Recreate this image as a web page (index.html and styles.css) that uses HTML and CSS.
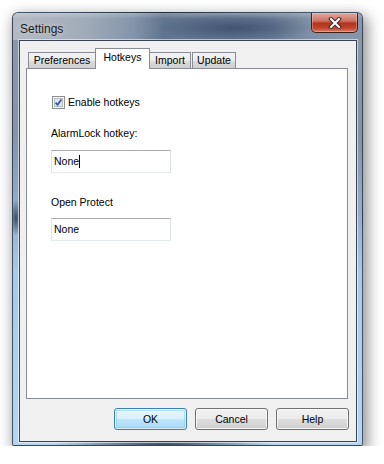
FILE: index.html
```html
<!DOCTYPE html>
<html lang="en">

<head>
    <meta charset="UTF-8">
    <title>Settings</title>
    <link rel="stylesheet" href="styles.css">
</head>

<body>
    <div class="window">
        <div class="titlebar">
            <span class="title">Settings</span>
            <div class="close">
                <svg width="14" height="12" viewBox="0 0 14 12">
                    <path d="M3 2 L11 10 M11 2 L3 10" stroke="#3a2b2b" stroke-width="4" stroke-linecap="square" />
                    <path d="M3 2 L11 10 M11 2 L3 10" stroke="#ffffff" stroke-width="2" stroke-linecap="square" />
                </svg>
            </div>
        </div>

        <div class="client">
            <div class="tabs">
                <div class="tab tab-pref">Preferences</div>
                <div class="tab tab-hot active">Hotkeys</div>
                <div class="tab tab-import">Import</div>
                <div class="tab tab-update">Update</div>
            </div>

            <div class="panel">
                <div class="check">
                    <span class="box">
                        <svg width="13" height="13" viewBox="0 0 13 13">
                            <rect x="0.5" y="0.5" width="12" height="12" fill="#f4f4f4" stroke="#8e8f8f" />
                            <rect x="2.5" y="2.5" width="8" height="8" fill="#dfe6ef" stroke="#b4bcc8" />
                            <path d="M3.6 6.6 L5.6 8.8 L9.4 3.4" fill="none" stroke="#3e5c96" stroke-width="1.8" />
                        </svg>
                    </span>
                    Enable hotkeys
                </div>

                <div class="field-label">AlarmLock hotkey:</div>
                <div class="textbox">None<span class="caret"></span></div>

                <div class="field-label second">Open Protect</div>
                <div class="textbox last">None</div>
            </div>

            <div class="buttons">
                <button class="btn default">OK</button>
                <button class="btn">Cancel</button>
                <button class="btn">Help</button>
            </div>
        </div>
    </div>
</body>

</html>
```

FILE: styles.css
```css
* {
    margin: 0;
    box-sizing: border-box;
}

body {
    background-color: #ffffff;
    margin: 0;
    font-family: "Liberation Sans", Arial, sans-serif;
    font-size: 10.5px;
    color: #000000;
}

/* glass frame */
.window {
    margin: 12px 0 0 12px;
    width: 351px;
    height: 434px;
    padding: 0 5px 5px 6px;
    border-radius: 6px 6px 2px 2px;
    border: 1px solid rgba(30, 40, 55, 0.75);
    background:
        radial-gradient(ellipse 110px 8px at 150px 100%, rgba(45, 60, 82, 0.95), rgba(45, 60, 82, 0) 100%),
        radial-gradient(ellipse 6px 18px at 3px 205px, rgba(50, 66, 86, 0.9), rgba(50, 66, 86, 0) 100%),
        linear-gradient(to bottom, #8d9ab0 0, #8393a9 120px, #93aecd 200px, #a8c9ec 260px, #b4d5f3 100%);
    box-shadow: 3px 5px 14px 2px rgba(0, 0, 0, 0.42);
    overflow: hidden;
}

.titlebar {
    height: 27px;
    display: flex;
    justify-content: space-between;
    align-items: flex-start;
    margin: 0 -5px 0 -6px;
    padding: 0 4px 0 7px;
    background:
        radial-gradient(ellipse 78px 14px at 222px 15px, rgba(52, 70, 100, 0.75), rgba(52, 70, 100, 0) 100%),
        linear-gradient(to bottom, rgba(255, 255, 255, 0.25) 0, rgba(255, 255, 255, 0) 6px),
        linear-gradient(to right, #b3bac4 0, #a2acb9 70px, #8595aa 120px, #61748f 150px, #6a7c96 260px, #8191a6 300px, #8797ab 100%);
}

.title {
    font-size: 12px;
    line-height: 14px;
    margin-top: 9px;
    color: #1c1c1c;
    text-shadow: 0 0 6px rgba(255, 255, 255, 0.6);
}

.close {
    width: 47px;
    height: 20px;
    display: flex;
    align-items: center;
    justify-content: center;
    border: 1px solid #3d1e1e;
    border-top: none;
    border-radius: 0 0 5px 5px;
    background: linear-gradient(to bottom, #e0a99e 0, #d07565 40%, #b2341f 55%, #c3452c 80%, #d8836d 100%);
    box-shadow: inset 0 0 0 1px rgba(255, 220, 210, 0.35);
}

/* client area */
.client {
    height: 402px;
    border: 1px solid #3b4350;
    background-color: #f0f0f0;
    padding: 7px 8px 11px 6px;
    display: flex;
    flex-direction: column;
    box-shadow: 0 0 0 1px rgba(255, 255, 255, 0.55);
}

.tabs {
    height: 20px;
    display: flex;
    align-items: flex-end;
    padding-left: 2px;
}

.tab {
    height: 16px;
    line-height: 15px;
    text-align: center;
    border: 1px solid #898c95;
    border-bottom: none;
    background: linear-gradient(to bottom, #f3f3f3 0, #ebebeb 50%, #dddddd 51%, #cfcfcf 100%);
}

.tab-pref {
    width: 68px;
}

.tab-hot {
    width: 55px;
    margin-left: -1px;
}

.tab-import {
    width: 42px;
    margin-left: -1px;
}

.tab-update {
    width: 44px;
    margin-left: 1px;
}

.tab.active {
    height: 21px;
    line-height: 16px;
    margin-bottom: -1px;
    background: #ffffff;
    position: relative;
    z-index: 1;
}

.panel {
    flex: 1;
    background-color: #ffffff;
    border: 1px solid #898c95;
    padding: 26px 0 0 24px;
}

.check {
    display: flex;
    align-items: center;
    height: 14px;
    line-height: 14px;
}

.box {
    display: flex;
    width: 13px;
    height: 13px;
    margin: 1px 3px 0 1px;
}

.field-label {
    line-height: 14px;
    margin-top: 17px;
}

.field-label.second {
    margin-top: 22px;
}

.textbox {
    width: 120px;
    height: 23px;
    margin-top: 10px;
    line-height: 21px;
    padding-left: 2px;
    border: 1px solid;
    border-color: #abadb3 #dbdfe6 #e3e9ef #e2e3ea;
    display: flex;
    align-items: center;
}

.textbox.last {
    margin-top: 9px;
}

.caret {
    width: 1px;
    height: 13px;
    background-color: #000000;
}

.buttons {
    display: flex;
    justify-content: flex-end;
    gap: 8px;
    margin: 9px -1px 0 0;
}

.btn {
    width: 73px;
    height: 22px;
    font-family: "Liberation Sans", Arial, sans-serif;
    font-size: 10.5px;
    color: #000000;
    border: 1px solid #707070;
    border-radius: 3px;
    background: linear-gradient(to bottom, #f2f2f2 0, #ebebeb 50%, #dddddd 51%, #cfcfcf 100%);
    box-shadow: inset 0 0 0 1px rgba(255, 255, 255, 0.8);
    padding: 0;
}

.btn.default {
    border-color: #3c7fb1;
    background: linear-gradient(to bottom, #eaf6fd 0, #d9f0fc 50%, #bee6fd 51%, #a7d9f5 100%);
    box-shadow: inset 0 0 0 1px rgba(255, 255, 255, 0.7), inset 0 0 0 2px rgba(120, 200, 240, 0.5);
}
```
